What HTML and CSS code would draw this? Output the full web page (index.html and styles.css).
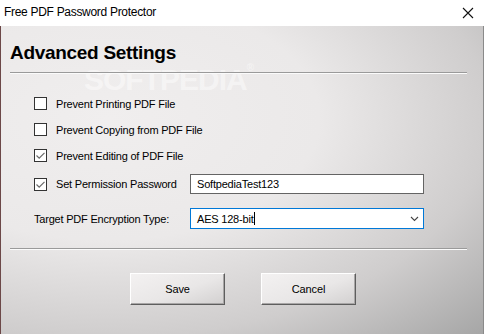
FILE: index.html
```html
<!DOCTYPE html>
<html>
<head>
<meta charset="utf-8">
<link rel="stylesheet" href="styles.css">
</head>
<body>
<div class="window">
  <div class="titlebar">
    <span class="title">Free PDF Password Protector</span>
    <svg class="close" width="12" height="12" viewBox="0 0 12 12"><path d="M1 1 L11 11 M11 1 L1 11" stroke="#111" stroke-width="1.1" fill="none"/></svg>
  </div>
  <div class="content">
    <div class="watermark">SOFTPEDIA<span class="reg">®</span></div>
    <h1 class="heading">Advanced Settings</h1>
    <div class="sep"></div>
    <div class="options">
      <div class="row"><span class="box"></span><span class="label">Prevent Printing PDF File</span></div>
      <div class="row"><span class="box"></span><span class="label">Prevent Copying from PDF File</span></div>
      <div class="row"><span class="box"><svg width="11" height="11" viewBox="0 0 11 11"><path d="M1.5 5.5 L4.2 8.2 L9.5 2.8" stroke="#6a6a6a" stroke-width="1.2" fill="none"/></svg></span><span class="label">Prevent Editing of PDF File</span></div>
      <div class="row tall"><span class="box"><svg width="11" height="11" viewBox="0 0 11 11"><path d="M1.5 5.5 L4.2 8.2 L9.5 2.8" stroke="#6a6a6a" stroke-width="1.2" fill="none"/></svg></span><span class="label wide">Set Permission Password</span><div class="input">SoftpediaTest123</div></div>
      <div class="row select-row"><span class="label enc">Target PDF Encryption Type:</span><div class="select"><span class="val">AES 128-bit</span><span class="caret"></span><svg class="chev" width="9" height="6" viewBox="0 0 9 6"><path d="M1 1 L4.5 4.5 L8 1" stroke="#444" stroke-width="1.1" fill="none"/></svg></div></div>
    </div>
    <div class="sep sep2"></div>
    <div class="buttons">
      <button class="btn">Save</button>
      <button class="btn">Cancel</button>
    </div>
  </div>
</div>
</body>
</html>
```
FILE: styles.css
```css
html, body {
  margin: 0;
  padding: 0;
  width: 484px;
  height: 334px;
  overflow: hidden;
}
.window {
  width: 484px;
  height: 334px;
  display: flex;
  flex-direction: column;
  font-family: "Liberation Sans", Arial, sans-serif;
  color: #000;
}
.titlebar {
  height: 26px;
  background: #fff;
  display: flex;
  align-items: center;
  justify-content: space-between;
  padding: 0 10px 0 4px;
  flex: none;
}
.title {
  font-size: 12px;
  letter-spacing: -0.3px;
  margin-top: -2px;
}
.close {
  margin-top: -1px;
}
.content {
  flex: 1;
  position: relative;
  border-left: 1px solid #6c4848;
  border-right: 1px solid #8a8a8a;
  background: radial-gradient(ellipse farthest-corner at 22% 30%, #f0eeee 0%, #ebe9e9 40%, #cfcdcd 72%, #a6a6a6 100%);
  padding: 17px 16px 0 9px;
  display: flex;
  flex-direction: column;
}
.watermark {
  position: absolute;
  left: 83px;
  top: 37px;
  height: 34px;
  font-size: 30px;
  font-weight: bold;
  color: rgba(255, 255, 255, 0.45);
  line-height: 34px;
  letter-spacing: -1px;
  pointer-events: none;
  white-space: nowrap;
}
.reg {
  font-size: 10px;
  vertical-align: top;
  line-height: 10px;
}
.heading {
  margin: 0;
  font-size: 19px;
  line-height: 19px;
  font-weight: bold;
  letter-spacing: -0.3px;
  position: relative;
}
.sep {
  margin-top: 10px;
  height: 1px;
  background: #9a9a9a;
  border-bottom: 1px solid #fbfbfb;
  position: relative;
}
.options {
  display: flex;
  flex-direction: column;
  gap: 13px;
  padding: 23px 0 0 24px;
  font-size: 11px;
  letter-spacing: -0.2px;
  position: relative;
}
.row {
  display: flex;
  align-items: center;
  height: 13px;
}
.row.tall {
  height: 20px;
  margin-top: -1px;
}
.select-row {
  height: 21px;
  margin-top: 1px;
}
.box {
  width: 11px;
  height: 11px;
  border: 1px solid #333;
  background: #fff;
  flex: none;
  display: flex;
}
.label {
  margin-left: 9px;
  white-space: nowrap;
}
.label.wide {
  width: 134px;
}
.label.enc {
  margin-left: 0;
  width: 156px;
}
.input {
  width: 226px;
  height: 18px;
  border: 1px solid #646464;
  background: #fff;
  padding-left: 6px;
  display: flex;
  align-items: center;
  font-size: 11px;
}
.select {
  width: 226px;
  height: 19px;
  border: 1px solid #0078d7;
  background: #fff;
  padding-left: 6px;
  display: flex;
  align-items: center;
  position: relative;
}
.caret {
  width: 1px;
  height: 13px;
  background: #000;
}
.chev {
  position: absolute;
  right: 4px;
  top: 7px;
}
.sep2 {
  margin-top: 19px;
}
.buttons {
  display: flex;
  gap: 36px;
  padding: 23px 0 0 120px;
}
.btn {
  width: 95px;
  height: 32px;
  font-family: "Liberation Sans", Arial, sans-serif;
  font-size: 11px;
  letter-spacing: -0.1px;
  color: #000;
  border: 1px solid;
  border-color: #ffffff #5e5e5e #5e5e5e #ffffff;
  box-shadow: inset -1px -1px 0 #a8a6a6;
  background: linear-gradient(160deg, #f3f1f1 0%, #e9e7e7 55%, #d2d0d0 100%);
  padding: 0;
  margin: 0;
}
```
